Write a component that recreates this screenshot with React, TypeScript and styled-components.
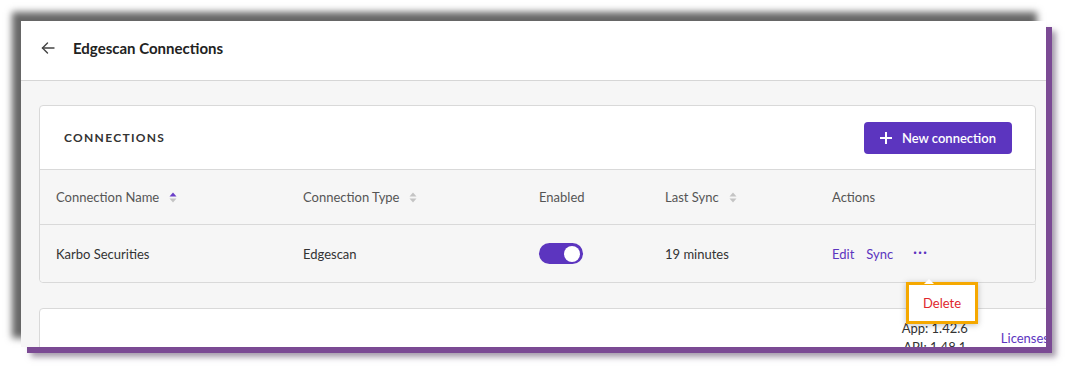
import React from 'react';
import styled, { createGlobalStyle } from 'styled-components';

const GlobalStyle = createGlobalStyle`
  html, body {
    margin: 0;
    padding: 0;
    background: #ffffff;
  }
  body {
    font-family: Lato, "Open Sans", "Liberation Sans", sans-serif;
    color: #333;
  }
`;

const Stage = styled.div`
  width: 1088px;
  height: 389px;
  padding: 21px 0 0 21px;
  box-sizing: border-box;
  overflow: hidden;
`;

const Frame = styled.div`
  width: 1025px;
  height: 326px;
  overflow: hidden;
  background: #f6f6f6;
  box-shadow:
    -9px -9px 7px rgba(0, 0, 0, 0.6),
    6px 6px 0 #7b4a94,
    10px 10px 6px rgba(90, 70, 100, 0.55);
  display: flex;
  flex-direction: column;
`;

const Header = styled.div`
  height: 59px;
  flex-shrink: 0;
  background: #fff;
  border-bottom: 1px solid #d6d6d6;
  display: flex;
  align-items: center;
  padding: 0 0 6px 19px;
  box-sizing: border-box;
  height: 60px;
  gap: 17px;
`;

const BackButton = styled.button`
  border: none;
  background: none;
  padding: 0;
  display: flex;
  align-items: center;
  color: #444;
  cursor: pointer;
`;

const Title = styled.h1`
  margin: 0;
  font-size: 15px;
  font-weight: 700;
  color: #222;
`;

const Body = styled.div`
  padding: 24px 0 0 18px;
  display: flex;
  flex-direction: column;
  gap: 25px;
`;

const Card = styled.div<{ $wide?: boolean }>`
  width: ${p => (p.$wide ? '1040px' : '995px')};
  border: 1px solid #d9d9d9;
  border-radius: 4px;
  background: #fff;
  flex-shrink: 0;
`;

const CardHeader = styled.div`
  height: 63px;
  display: flex;
  align-items: center;
  justify-content: space-between;
  padding: 0 23px 0 24px;
  border-bottom: 1px solid #d9d9d9;
`;

const CardTitle = styled.h2`
  margin: 0;
  font-size: 12px;
  font-weight: 700;
  letter-spacing: 1.3px;
  color: #333;
`;

const PrimaryButton = styled.button`
  height: 32px;
  padding: 0 16px 0 16px;
  border: none;
  border-radius: 4px;
  background: #5c35bf;
  color: #fff;
  font-family: inherit;
  font-size: 13px;
  font-weight: 600;
  display: flex;
  align-items: center;
  gap: 10px;
  cursor: pointer;
`;

const Row = styled.div<{ $head?: boolean }>`
  display: grid;
  grid-template-columns: 247px 236px 126px 167px 1fr;
  align-items: center;
  height: ${p => (p.$head ? '54px' : '57px')};
  padding-left: 16px;
  background: #f6f6f6;
  border-bottom: ${p => (p.$head ? '1px solid #d9d9d9' : 'none')};
  border-radius: ${p => (p.$head ? '0' : '0 0 4px 4px')};
  font-size: 13px;
  color: ${p => (p.$head ? '#555' : '#333')};
`;

const HeadCell = styled.div`
  display: flex;
  align-items: center;
  gap: 10px;
`;

const Cell = styled.div`
  display: flex;
  align-items: center;
  position: relative;
`;

const Toggle = styled.div<{ $on: boolean }>`
  width: 44px;
  height: 21px;
  border-radius: 11px;
  background: ${p => (p.$on ? '#5c35bf' : '#ccc')};
  display: flex;
  align-items: center;
  justify-content: ${p => (p.$on ? 'flex-end' : 'flex-start')};
  padding: 0 3px;
  box-sizing: border-box;
`;

const Knob = styled.div`
  width: 16px;
  height: 16px;
  border-radius: 50%;
  background: #fff;
`;

const Actions = styled.div`
  display: flex;
  align-items: center;
  gap: 12px;
  color: #5c35bf;
  position: relative;
`;

const ActionLink = styled.span`
  cursor: pointer;
`;

const More = styled.span`
  margin-left: 8px;
  letter-spacing: 1.5px;
  font-weight: 700;
  position: relative;
  top: -2px;
`;

const Popover = styled.div`
  position: absolute;
  left: 74px;
  top: 36px;
  width: 66px;
  height: 36px;
  background: #fff;
  border: 3px solid #f5a800;
  box-shadow: 0 1px 6px rgba(0, 0, 0, 0.25);
  display: flex;
  align-items: center;
  justify-content: center;
  color: #e0262d;
  font-size: 13px;
  z-index: 2;

  &::before {
    content: '';
    position: absolute;
    top: -11px;
    left: 15px;
    border: 5px solid transparent;
    border-bottom-color: #fff;
  }
`;

const Footer = styled.div`
  height: 80px;
  display: flex;
  justify-content: flex-end;
  padding-right: 31px;
  gap: 33px;
  font-size: 13px;
`;

const Versions = styled.div`
  display: flex;
  flex-direction: column;
  align-items: center;
  padding-top: 11px;
  gap: 3px;
  color: #333;
`;

const Licenses = styled.a`
  color: #5c35bf;
  padding-top: 21px;
`;

const SortIcon = ({ active }: { active?: boolean }) => (
  <svg width="8" height="11" viewBox="0 0 8 11">
    <path d="M0.5 4.5 L4 0.5 L7.5 4.5 Z" fill={active ? '#6a3fc8' : '#c4c4c4'} />
    <path d="M0.5 6.5 L4 10.5 L7.5 6.5 Z" fill="#c4c4c4" />
  </svg>
);

const ArrowLeft = () => (
  <svg width="16" height="16" viewBox="0 0 16 16" fill="none" stroke="#444" strokeWidth="1.4" strokeLinecap="round">
    <path d="M14 8 H2.5" />
    <path d="M7.5 3 L2.5 8 L7.5 13" />
  </svg>
);

const Plus = () => (
  <svg width="12" height="12" viewBox="0 0 12 12" stroke="#fff" strokeWidth="2">
    <path d="M6 0 V12 M0 6 H12" />
  </svg>
);

export default function App() {
  return (
    <Stage>
      <GlobalStyle />
      <Frame>
        <Header>
          <BackButton aria-label="Back">
            <ArrowLeft />
          </BackButton>
          <Title>Edgescan Connections</Title>
        </Header>
        <Body>
          <Card>
            <CardHeader>
              <CardTitle>CONNECTIONS</CardTitle>
              <PrimaryButton>
                <Plus />
                New connection
              </PrimaryButton>
            </CardHeader>
            <Row $head>
              <HeadCell>Connection Name <SortIcon active /></HeadCell>
              <HeadCell>Connection Type <SortIcon /></HeadCell>
              <HeadCell>Enabled</HeadCell>
              <HeadCell>Last Sync <SortIcon /></HeadCell>
              <HeadCell>Actions</HeadCell>
            </Row>
            <Row>
              <Cell>Karbo Securities</Cell>
              <Cell>Edgescan</Cell>
              <Cell>
                <Toggle $on>
                  <Knob />
                </Toggle>
              </Cell>
              <Cell>19 minutes</Cell>
              <Cell>
                <Actions>
                  <ActionLink>Edit</ActionLink>
                  <ActionLink>Sync</ActionLink>
                  <More>···</More>
                  <Popover>Delete</Popover>
                </Actions>
              </Cell>
            </Row>
          </Card>
          <Card $wide>
            <Footer>
              <Versions>
                <span>App: 1.42.6</span>
                <span>API: 1.48.1</span>
              </Versions>
              <Licenses>Licenses</Licenses>
            </Footer>
          </Card>
        </Body>
      </Frame>
    </Stage>
  );
}
